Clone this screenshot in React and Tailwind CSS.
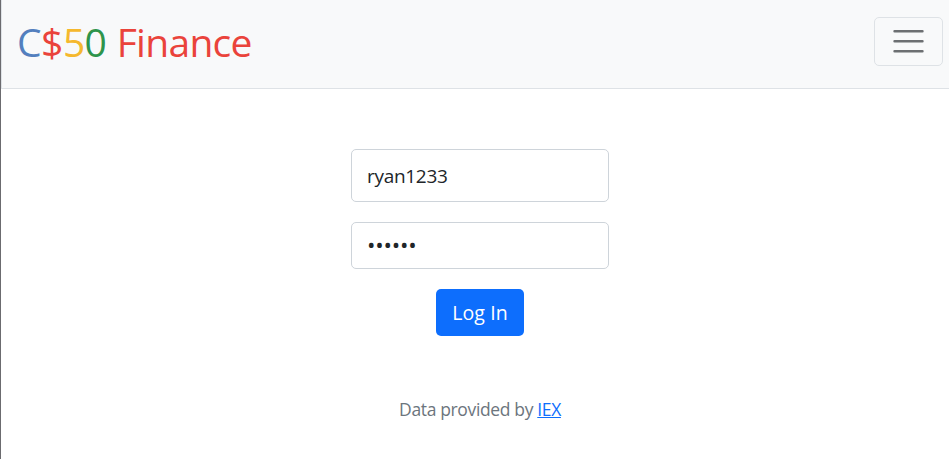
export default function App() {
  return (
    <div className="h-[459px] w-[949px] overflow-hidden border-l border-[#6b6b6f] bg-white font-['Open_Sans',sans-serif] text-[#212529]">
      <nav className="flex h-[89px] items-start justify-between border-b border-l border-[#dee2e6] bg-[#f8f9fa] pr-[6px] pl-[15px]">
        <a href="#" className="mt-[12px] flex text-[39px] leading-[60px] font-normal tracking-[-0.7px] whitespace-pre">
          <span className="text-[#537fbe]">C</span>
          <span className="text-[#ea433b]">$</span>
          <span className="pl-[0.5px] text-[#f5b82e]">5</span>
          <span className="text-[#2e944b]">0</span>
          <span className="pl-[1px] text-[#ea433b]"> Finance</span>
        </a>
        <button aria-label="Toggle navigation" className="mt-[17px] flex h-[49px] w-[69px] items-start justify-center rounded-[5px] border border-[#dee2e6] pt-[4px] pr-[1px]">
          <svg width="38" height="38" viewBox="0 0 30 30" fill="none">
            <path stroke="rgba(33,37,41,0.65)" strokeLinecap="round" strokeMiterlimit="10" strokeWidth="2" d="M4.4 7.3h22M4.4 15.2h22M4.4 23.1h22" />
          </svg>
        </button>
      </nav>
      <form className="flex flex-col items-center pt-[60px] pl-[10px]">
        <input readOnly value="ryan1233" className="h-[53px] w-[258px] rounded-[5px] border border-[#ced4da] px-[15px] text-[19px] tracking-[-0.3px] outline-none" />
        <input readOnly value="••••••" className="mt-5 h-[47px] w-[258px] rounded-[5px] border border-[#ced4da] px-[15px] pb-[2px] text-[22.5px] tracking-[-0.2px] outline-none" />
        <button type="button" className="mt-5 h-[47px] w-[88px] rounded-[5px] bg-[#0d6efd] pt-[1px] text-[19.5px] tracking-[0.1px] text-white">Log In</button>
      </form>
      <footer className="pt-[59px] pl-[10px] text-center text-[17.5px] leading-[28px] tracking-[-0.36px] text-[#6c757d]">
        Data provided by <a href="#" className="text-[#0d6efd] underline">IEX</a>
      </footer>
    </div>
  );
}
